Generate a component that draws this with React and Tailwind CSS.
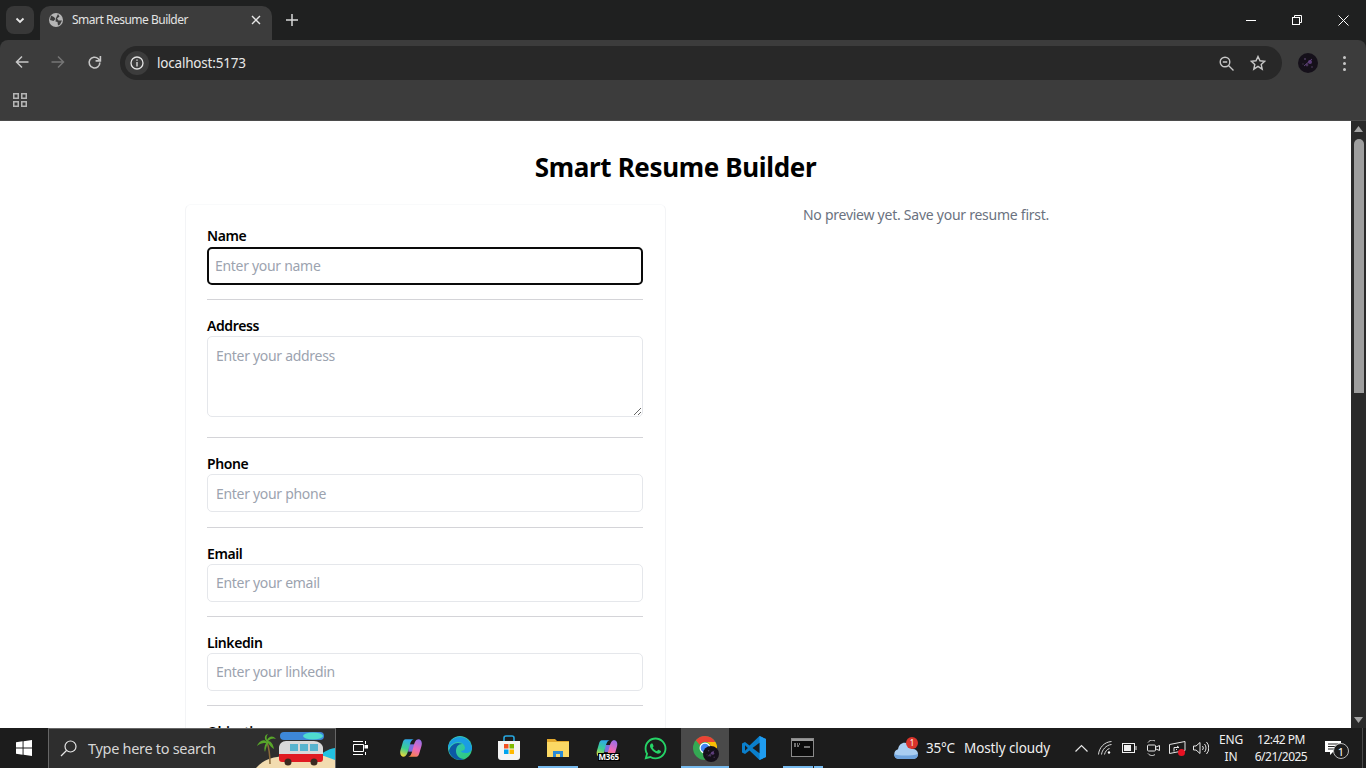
import React from "react";
import { FaWhatsapp } from "react-icons/fa";

const Avatar = ({ size = 20 }) => (
  <svg width={size} height={size} viewBox="0 0 20 20">
    <circle cx="10" cy="10" r="10" fill="#15101a" />
    <circle cx="7" cy="6" r="1" fill="#4b3a5c" />
    <circle cx="12" cy="9" r="2" fill="#5a3b77" />
    <circle cx="9" cy="12" r="1.4" fill="#473357" />
    <circle cx="14" cy="14" r="1" fill="#3a2c47" />
    <circle cx="5" cy="11" r="0.8" fill="#3d3544" />
    <path d="M6 13 14 6" stroke="#6c4a8c" strokeWidth="0.8" />
  </svg>
);

const CopilotShape = () => (
  <>
    <path d="M9 8h7v8H9z" fill="#7a6fe0" />
    <path d="M6 2.500h9c-2 .5-3 2-4 5l-2 7c-1 4-2.500 7-5 7-3 0-4.500-3-3.500-7L3 6c.5-2 1.500-3.500 3-3.500z" fill="url(#cpa)" />
    <path d="M18 21.500H9c2-.5 3-2 4-5l2-7c1-4 2.500-7 5-7 3 0 4.500 3 3.500 7L21 18c-.5 2-1.500 3.500-3 3.500z" fill="url(#cpb)" />
  </>
);

const Copilot = () => (
  <svg width="22" height="24" viewBox="0 0 24 24">
    <defs>
      <linearGradient id="cpa" x1="0.6" y1="0" x2="0.3" y2="1">
        <stop offset="0" stopColor="#2fa8ee" />
        <stop offset="0.55" stopColor="#3ccf91" />
        <stop offset="1" stopColor="#e8d83a" />
      </linearGradient>
      <linearGradient id="cpb" x1="0.7" y1="0" x2="0.3" y2="1">
        <stop offset="0" stopColor="#9a6fe8" />
        <stop offset="0.55" stopColor="#ef6ab8" />
        <stop offset="1" stopColor="#f5834a" />
      </linearGradient>
    </defs>
    <CopilotShape />
  </svg>
);

const M365 = () => (
  <svg width="24" height="21" viewBox="0 0 24 24">
    <CopilotShape />
  </svg>
);

const Edge = () => (
  <svg width="24" height="24" viewBox="0 0 24 24">
    <defs>
      <linearGradient id="ed1" x1="0" y1="0" x2="1" y2="1">
        <stop offset="0" stopColor="#37c6d0" />
        <stop offset="1" stopColor="#2ecb6f" />
      </linearGradient>
    </defs>
    <circle cx="12" cy="12" r="12" fill="url(#ed1)" />
    <path d="M0 13C0 6 5 1 12 1c6 0 11 4 12 11 0 3-3 5-6 5-3 0-5-1-5-2 2 0 4-1 4-3 0-3-3-6-7-6C6 6 2 9 0 13z" fill="#1b9de2" />
    <path d="M1 15c1-5 5-8 9-8 2 0 4 1 4 1-4 0-6 3-6 7 0 4 3 8 8 8-1 .6-3 1-4 1-5 0-10-4-11-9z" fill="#0c59a4" />
  </svg>
);

const Store = () => (
  <svg width="24" height="26" viewBox="0 0 24 26">
    <path d="M7 6V3a2 2 0 0 1 2-2h6a2 2 0 0 1 2 2v3" fill="none" stroke="#27a7df" strokeWidth="1.600" />
    <path d="M1 6h22v16a3 3 0 0 1-3 3H4a3 3 0 0 1-3-3z" fill="#f4f4f4" />
    <rect x="7" y="9" width="4.500" height="4.500" fill="#f25022" />
    <rect x="12.500" y="9" width="4.500" height="4.500" fill="#7fba00" />
    <rect x="7" y="14.500" width="4.500" height="4.500" fill="#00a4ef" />
    <rect x="12.500" y="14.500" width="4.500" height="4.500" fill="#ffb900" />
  </svg>
);

const Explorer = () => (
  <svg width="24" height="20" viewBox="0 0 24 20">
    <path d="M1 1h8l2 2h12v16H1z" fill="#e3a92d" />
    <path d="M1 4h22v15H1z" fill="#fbd864" />
    <path d="M7 19v-6h10v6h-3v-3h-4v3z" fill="#2a8ad4" />
  </svg>
);

const Chrome = () => (
  <span className="relative block h-[24px] w-[24px]">
    <svg width="24" height="24" viewBox="0 0 24 24">
      <circle cx="12" cy="12" r="12" fill="#34a853" />
      <path d="M12 0a12 12 0 0 1 10.400 6H12a6 6 0 0 0-5.200 3L2.800 4.300A12 12 0 0 1 12 0z" fill="#ea4335" />
      <path d="M22.400 6A12 12 0 0 1 12 24l5.200-9A6 6 0 0 0 12 6z" fill="#fbbc05" />
      <circle cx="12" cy="12" r="5.500" fill="#fff" />
      <circle cx="12" cy="12" r="4.300" fill="#4285f4" />
    </svg>
    <span className="absolute left-[10px] top-[10px]">
      <Avatar size={16} />
    </span>
  </span>
);

const VsCode = () => (
  <svg width="24" height="24" viewBox="0 0 24 24">
    <path d="M17.500 0 24 3v18l-6.500 3-10-9.500L3 18l-3-1.500v-9L3 6l4.500 3.500z" fill="#0a7fcc" />
    <path d="M17.500 0 24 3v18l-6.500 3z" fill="#1f9cf0" />
    <path d="M17.500 6.800v10.400L10.500 12z" fill="#1c1c1c" />
    <path d="M3 9.200v5.600L5.800 12z" fill="#1c1c1c" />
  </svg>
);

const Cmd = () => (
  <svg width="23" height="20" viewBox="0 0 23 20">
    <rect x="0.500" y="0.500" width="22" height="18" fill="#0c0c0c" stroke="#8a8a8a" />
    <rect x="1" y="1" width="21" height="2" fill="#9a9a9a" />
    <path d="M3 6h2M3 8h2M6 6h1M8 6h1M6 8h2M13 9h6" stroke="#d8d8d8" strokeWidth="1" />
  </svg>
);

const TaskIcon = ({ children, open, split }) => (
  <div className="relative flex h-full w-[49px] shrink-0 items-center justify-center">
    {children}
    {open && <span className="absolute bottom-0 left-[5px] h-[2px] w-[40px] bg-[#76b9ed]" />}
    {split && <span className="absolute bottom-0 left-[35px] h-[2px] w-px bg-[#1c1c1c]" />}
  </div>
);

const Field = ({ label, placeholder, focus, area }) => (
  <div>
    <label className="block h-[20px] text-[14px] font-semibold leading-[20px] tracking-[-0.4px] text-black">{label}</label>
    {area ? (
      <textarea
        readOnly
        placeholder={placeholder}
        className="block h-[81px] w-full rounded-[5px] border border-[#e5e7eb] bg-white px-[8px] pb-[8px] pt-[9px] text-[14px] leading-[20px] tracking-[-0.3px] outline-none placeholder:text-[#9ca3af]"
      />
    ) : (
      <input
        readOnly
        placeholder={placeholder}
        className={`block h-[38px] w-full rounded-[5px] bg-white text-[14px] tracking-[-0.3px] outline-none placeholder:text-[#9ca3af] ${focus ? "mt-[0.35px] border-2 border-[#0a0a0a] px-[6px]" : "border border-[#e5e7eb] px-[8px]"}`}
      />
    )}
  </div>
);

const Hr = ({ big }) => <div className={`h-px bg-[#d4d4d8] ${big ? "mb-[16px] mt-[20px]" : "mb-[16px] mt-[14.4px]"}`} />;

const BrowserChrome = () => (
  <div className="flex h-[121px] shrink-0 flex-col bg-[#1f2020] font-['Noto_Sans',sans-serif] text-white">
    <div className="flex h-[40px] shrink-0 items-end">
      <div className="mb-[6px] ml-[6px] flex h-[28px] w-[28px] items-center justify-center rounded-[8px] bg-[#383838]">
        <svg width="12" height="12" viewBox="0 0 12 12" fill="none" stroke="#e6e6e6" strokeWidth="1.800"><path d="M2.500 4.500 6 8l3.500-3.500" /></svg>
      </div>
      <div className="relative ml-[6px] flex h-[34px] w-[232px] items-center rounded-t-[10px] bg-[#3c3c3c] pb-[6px] pl-[9px] pr-[9px]">
        <svg width="14" height="14" viewBox="0 0 14 14">
          <circle cx="7" cy="7" r="7" fill="#b5b5b5" />
          <path d="M2 2.500 5 4 6.500 6 4.500 8 1 7zM9 1l1.500 2.500L8 5.500 9.500 7.500H13L11 11.500 9 12.500 8.500 9 6.500 8.500 7 5z" fill="#3c3c3c" />
        </svg>
        <span className="ml-[9px] whitespace-nowrap text-[12px] tracking-[-0.5px] text-[#e3e3e3]">Smart Resume Builder</span>
        <svg className="ml-auto mr-[2px]" width="10" height="10" viewBox="0 0 10 10" stroke="#e6e6e6" strokeWidth="1.400"><path d="M1 1l8 8M9 1 1 9" /></svg>
      </div>
      <svg className="mb-[14px] ml-[14px]" width="12" height="12" viewBox="0 0 12 12" stroke="#d8d8d8" strokeWidth="1.500"><path d="M6 0v12M0 6h12" /></svg>
      <div className="ml-auto flex h-full items-center">
        <div className="flex w-[46px] justify-center">
          <svg width="10" height="10" viewBox="0 0 10 10" stroke="#fff"><path d="M0 5.500h10" /></svg>
        </div>
        <div className="flex w-[46px] justify-center">
          <svg width="10" height="10" viewBox="0 0 10 10" fill="none" stroke="#fff"><rect x="0.500" y="2.500" width="7" height="7" /><path d="M2.500 2.500v-2h7v7h-2" /></svg>
        </div>
        <div className="flex w-[46px] justify-center">
          <svg width="11" height="11" viewBox="0 0 11 11" stroke="#fff"><path d="M.5.500l10 10M10.500.500l-10 10" /></svg>
        </div>
      </div>
    </div>
    <div className="flex flex-1 flex-col rounded-t-[8px] border-b border-[#4b4b4b] bg-[#3c3c3c]">
      <div className="flex h-[41px] shrink-0 items-center">
        <div className="mt-[3px] flex w-[44px] justify-center">
          <svg width="14" height="14" viewBox="0 0 14 14" fill="none" stroke="#c7c7c7" strokeWidth="1.500"><path d="M13.500 7H1.500M7 1.500 1.500 7 7 12.500" /></svg>
        </div>
        <div className="mt-[3px] flex w-[28px] justify-center">
          <svg width="14" height="14" viewBox="0 0 14 14" fill="none" stroke="#757575" strokeWidth="1.500"><path d="M.5 7h12M7 1.500 12.500 7 7 12.500" /></svg>
        </div>
        <div className="ml-[8px] mt-[3px] flex w-[28px] justify-center">
          <svg width="15" height="15" viewBox="0 0 14 14" fill="none" stroke="#c7c7c7" strokeWidth="1.500"><path d="M12 7a5 5 0 1 1-1.500-3.500L12 5" /><path d="M12.500 1v4.500H8" /></svg>
        </div>
        <div className="ml-[12px] mt-[5px] flex h-[34px] w-[1162px] items-center rounded-full bg-[#282828] pl-[5px] pr-[16px]">
          <div className="flex h-[24px] w-[24px] items-center justify-center rounded-full bg-[#3c3c3c]">
            <svg width="14" height="14" viewBox="0 0 14 14" fill="none" stroke="#e3e3e3" strokeWidth="1.300"><circle cx="7" cy="7" r="6" /><path d="M7 6v4.500M7 3.500v1.200" /></svg>
          </div>
          <span className="ml-[8px] text-[13.500px] tracking-[-0.2px] text-[#e8e8e8]">localhost:5173</span>
          <svg className="ml-auto" width="15" height="15" viewBox="0 0 15 15" fill="none" stroke="#c7c7c7" strokeWidth="1.400"><circle cx="6" cy="6" r="4.800" /><path d="M3.800 6h4.400M9.500 9.500l5 5" /></svg>
          <svg className="ml-[16px]" width="16" height="16" viewBox="0 0 16 16" fill="none" stroke="#c7c7c7" strokeWidth="1.400"><path d="M8 1.500l2 4.300 4.700.5-3.500 3.200 1 4.600L8 11.300l-4.200 2.800 1-4.600L1.300 6.300 6 5.800z" /></svg>
        </div>
        <div className="ml-[16px] mt-[5px]"><Avatar /></div>
        <div className="ml-[25px] mt-[5px] flex flex-col gap-[3px]">
          <span className="h-[3px] w-[3px] rounded-full bg-[#c7c7c7]" />
          <span className="h-[3px] w-[3px] rounded-full bg-[#c7c7c7]" />
          <span className="h-[3px] w-[3px] rounded-full bg-[#c7c7c7]" />
        </div>
      </div>
      <div className="flex flex-1 items-center pb-[2px] pl-[13px]">
        <svg width="14" height="14" viewBox="0 0 14 14" fill="none" stroke="#b5b5b5" strokeWidth="1.500">
          <rect x=".75" y=".75" width="4.500" height="4.500" /><rect x="8.750" y=".75" width="4.500" height="4.500" />
          <rect x=".75" y="8.750" width="4.500" height="4.500" /><rect x="8.750" y="8.750" width="4.500" height="4.500" />
        </svg>
      </div>
    </div>
  </div>
);

const Scrollbar = () => (
  <div className="flex w-[15px] shrink-0 flex-col items-center bg-[#2a2a2a]">
    <svg className="mt-[5px]" width="9" height="6" viewBox="0 0 9 6" fill="#a3a3a3"><path d="M4.500 0 9 6H0z" /></svg>
    <div className="mt-[7px] h-[254px] w-[10px] rounded-t-[5px] bg-[#9e9e9e]" />
    <div className="flex-1" />
    <svg className="mb-[5px]" width="9" height="6" viewBox="0 0 9 6" fill="#a3a3a3"><path d="M4.500 6 9 0H0z" /></svg>
  </div>
);

const Taskbar = () => (
  <div className="flex h-[40px] shrink-0 items-center bg-[#1c1c1c] font-['Noto_Sans',sans-serif] text-white">
    <div className="flex h-full w-[48px] shrink-0 items-center justify-center pr-[1px]">
      <svg width="16" height="16" viewBox="0 0 17 17" fill="#fff"><path d="M0 2.400 7 1.400V8H0zM8 1.200 17 0v8H8zM0 9h7v6.600l-7-1zM8 9h9v8l-9-1.200z" /></svg>
    </div>
    <div className="relative flex h-full w-[288px] shrink-0 items-center overflow-hidden border border-b-0 border-[#666] bg-[#2e2e2e] pl-[11px]">
      <svg width="17" height="17" viewBox="0 0 17 17" fill="none" stroke="#e5e5e5" strokeWidth="1.200"><circle cx="10.500" cy="6.500" r="5.500" /><path d="M6.500 10.500 1 16" /></svg>
      <span className="ml-[11px] whitespace-nowrap text-[14.500px] tracking-[-0.3px] text-[#d6d6d6]">Type here to search</span>
      <svg className="absolute bottom-0 right-0" width="80" height="40" viewBox="0 0 80 40">
        <path d="M60 32h20V20c-7 1-14 5-20 12z" fill="#22c0e0" />
        <path d="M1 40C8 32 16 29 30 28h39l11 4v8z" fill="#f2dcb0" />
        <path d="M15 36C15 26 14 20 12 14" stroke="#8b6b3b" strokeWidth="1.500" fill="none" />
        <path d="M12 14C8 10 4 14 2 18 6 15 8 15 11 15 9 18 9 22 10 24 11 20 12 17 13 15 15 18 17 20 19 21 18 16 16 13 13 13 16 10 19 10 21 11 18 7 14 8 12 12 11 9 12 7 13 6 9 7 9 11 12 14z" fill="#58a62a" />
        <rect x="25" y="4" width="44" height="8" rx="4" fill="#3d87d8" />
        <ellipse cx="58" cy="8" rx="10" ry="3.500" fill="#4fdcd0" />
        <path d="M24 30V20c0-4 3-7 7-7h28c4 0 9 3 9 7v10c0 2-1 3-3 3H27c-2 0-3-1-3-3z" fill="#d9d9d9" />
        <path d="M24 26h44v5c0 2-1 3-3 3H27c-2 0-3-1-3-3z" fill="#e01b22" />
        <rect x="35" y="16" width="8" height="7" fill="#57b4cf" />
        <rect x="45" y="16" width="8" height="7" fill="#57b4cf" />
        <rect x="55" y="16" width="8" height="7" fill="#57b4cf" />
        <circle cx="33" cy="34" r="3.500" fill="#3b2a20" />
        <circle cx="59" cy="34" r="3.500" fill="#3b2a20" />
      </svg>
    </div>
    <div className="flex h-full pl-[1px]">
      <TaskIcon>
        <svg className="mr-[3px]" width="16" height="16" viewBox="0 0 16 16" fill="none" stroke="#fff"><path d="M1 1.500h10M1 14.500h10M1.500 4.500h10v7h-10z" /><path d="M13.500 1v3M13.500 12v3" /><rect x="13" y="5.500" width="2.500" height="2.500" fill="#fff" /></svg>
      </TaskIcon>
      <TaskIcon><Copilot /></TaskIcon>
      <TaskIcon><Edge /></TaskIcon>
      <TaskIcon><Store /></TaskIcon>
      <TaskIcon open><Explorer /></TaskIcon>
      <TaskIcon>
        <div className="relative"><M365 />
          <span className="absolute left-[3px] top-[15px] bg-black px-[1px] text-[8px] font-bold leading-[8px] tracking-[-0.2px]">M365</span>
        </div>
      </TaskIcon>
      <TaskIcon><FaWhatsapp size={25} color="#25d366" /></TaskIcon>
      <div className="relative ml-[1px] flex h-full w-[48px] shrink-0 items-center justify-center bg-[#4a4a4a]">
        <Chrome />
        <span className="absolute bottom-0 left-0 h-[2px] w-full bg-[#76b9ed]" />
      </div>
      <TaskIcon><VsCode /></TaskIcon>
      <TaskIcon open split><Cmd /></TaskIcon>
    </div>
    <div className="ml-auto flex h-full items-center">
      <div className="relative mr-[8px] mt-[3px] flex w-[24px] items-center justify-center">
        <svg width="24" height="18" viewBox="0 0 24 18"><path d="M5 18a5 5 0 0 1-1-9.800C5 3 9 1 12 2c3 .8 5 3 5.500 6H19a5 5 0 0 1 0 10z" fill="#a9cdf0" /><path d="M0 13c4 2 18 2 24 0v1a5 5 0 0 1-5 4H5a5 5 0 0 1-5-4z" fill="#6fa3dc" /></svg>
        <span className="absolute -top-[4px] right-[0px] flex h-[12px] w-[12px] items-center justify-center rounded-full bg-[#d9342b] text-[8px] leading-none">1</span>
      </div>
      <span className="w-[38px] text-[13.500px] tracking-[-0.2px] text-[#f0f0f0]">35°C</span>
      <span className="w-[96px] whitespace-nowrap text-[13.500px] tracking-[-0.1px] text-[#f0f0f0]">Mostly cloudy</span>
      <div className="ml-[9px] flex w-[24px] justify-center">
        <svg width="13" height="8" viewBox="0 0 13 8" fill="none" stroke="#e6e6e6" strokeWidth="1.200"><path d="M.5 7.500l6-6 6 6" /></svg>
      </div>
      <div className="flex w-[24px] justify-center">
        <svg width="14" height="14" viewBox="0 0 14 14" fill="none" stroke="#d9d9d9"><path d="M.5 13.500C1 7 6 1 13.500 .5M3.500 13.500C4 9 8 4 13.500 3.500M6.500 13.500C7 11 9 8 11.500 7.500" /><circle cx="11" cy="11.500" r="1.200" fill="#fff" stroke="none" /></svg>
      </div>
      <div className="flex w-[24px] justify-center">
        <svg width="15" height="10" viewBox="0 0 15 10" fill="none" stroke="#f0f0f0"><rect x=".5" y=".5" width="12" height="9" /><rect x="2" y="2" width="7" height="6" fill="#f0f0f0" stroke="none" /><path d="M14 3v4" /></svg>
      </div>
      <div className="flex w-[24px] justify-center">
        <svg width="13" height="16" viewBox="0 0 13 16" fill="none" stroke="#e6e6e6"><path d="M1 2.500C3-.3 6-.3 8 1M1 13.500c2 2.500 5 2.500 7 1" /><rect x=".5" y="5" width="8" height="6" rx="1" /><path d="M9 7l3.500-1.500v5L9 9" /></svg>
      </div>
      <div className="relative flex w-[24px] justify-center">
        <svg width="17" height="15" viewBox="0 0 17 15" fill="none" stroke="#e6e6e6"><path d="M.5 3.500 16 .5v9L.5 12.500zM5 10.500V6.500h5M10 6.500 8 5M8 8.500h-1" /></svg>
        <span className="absolute left-[13px] top-[8px] h-[7px] w-[7px] rounded-full bg-[#e81123]" />
      </div>
      <div className="flex w-[24px] justify-center">
        <svg width="16" height="14" viewBox="0 0 16 14" fill="none" stroke="#e6e6e6"><path d="M.5 5v4h2.500L7 12.500v-11L3 5zM9.500 5a3 3 0 0 1 0 4M11.500 3a6 6 0 0 1 0 8M13.500 1a9 9 0 0 1 0 12" /></svg>
      </div>
      <div className="ml-[3px] flex w-[30px] flex-col items-center text-[12px] leading-[17px] tracking-[-0.2px] text-[#f0f0f0]">
        <span>ENG</span>
        <span>IN</span>
      </div>
      <div className="ml-[5px] flex w-[60px] flex-col items-center whitespace-nowrap text-[12px] leading-[17px] tracking-[-0.5px] text-[#f0f0f0]">
        <span>12:42 PM</span>
        <span>6/21/2025</span>
      </div>
      <div className="relative ml-[14px] flex h-full w-[37px] items-center">
        <svg width="17" height="17" viewBox="0 0 17 17" fill="#fff"><path d="M0 1h16v11H8l-3 3v-3H0z" /><path d="M3 4h10M3 6.500h10M3 9h7" stroke="#222" /></svg>
        <span className="absolute left-[8px] top-[15px] flex h-[16px] w-[16px] items-center justify-center rounded-full border border-[#bbb] bg-[#1c1c1c] text-[11px] leading-none">1</span>
      </div>
      <div className="h-full w-[4px] border-l border-[#4a4a4a]" />
    </div>
  </div>
);

export default function App() {
  return (
    <div className="flex h-screen w-full flex-col overflow-hidden bg-white">
      <BrowserChrome />
      <div className="flex min-h-0 flex-1">
        <main className="min-w-0 flex-1 overflow-hidden bg-white font-['Noto_Sans',sans-serif]">
          <h1 className="mt-[26px] text-center text-[26px] font-bold leading-[40px] tracking-[-0.35px] text-black">Smart Resume Builder</h1>
          <div className="mx-auto mt-[17px] flex w-[981px] gap-[20px]">
            <div className="w-[481px] shrink-0 rounded-t-[6px] border-x border-t border-x-[#f3f4f6] border-t-[#f9fafb] pb-[40px] pl-[21px] pr-[22px] pt-[21.4px]">
              <Field label="Name" placeholder="Enter your name" focus />
              <Hr />
              <Field label="Address" placeholder="Enter your address" area />
              <Hr big />
              <Field label="Phone" placeholder="Enter your phone" />
              <Hr />
              <Field label="Email" placeholder="Enter your email" />
              <Hr />
              <Field label="Linkedin" placeholder="Enter your linkedin" />
              <Hr />
              <Field label="Objective" placeholder="Enter your objective" area />
            </div>
            <div className="mt-[3px] flex-1 text-center text-[14px] leading-[16px] tracking-[-0.25px] text-[#6b7280]">No preview yet. Save your resume first.</div>
          </div>
        </main>
        <Scrollbar />
      </div>
      <Taskbar />
    </div>
  );
}
